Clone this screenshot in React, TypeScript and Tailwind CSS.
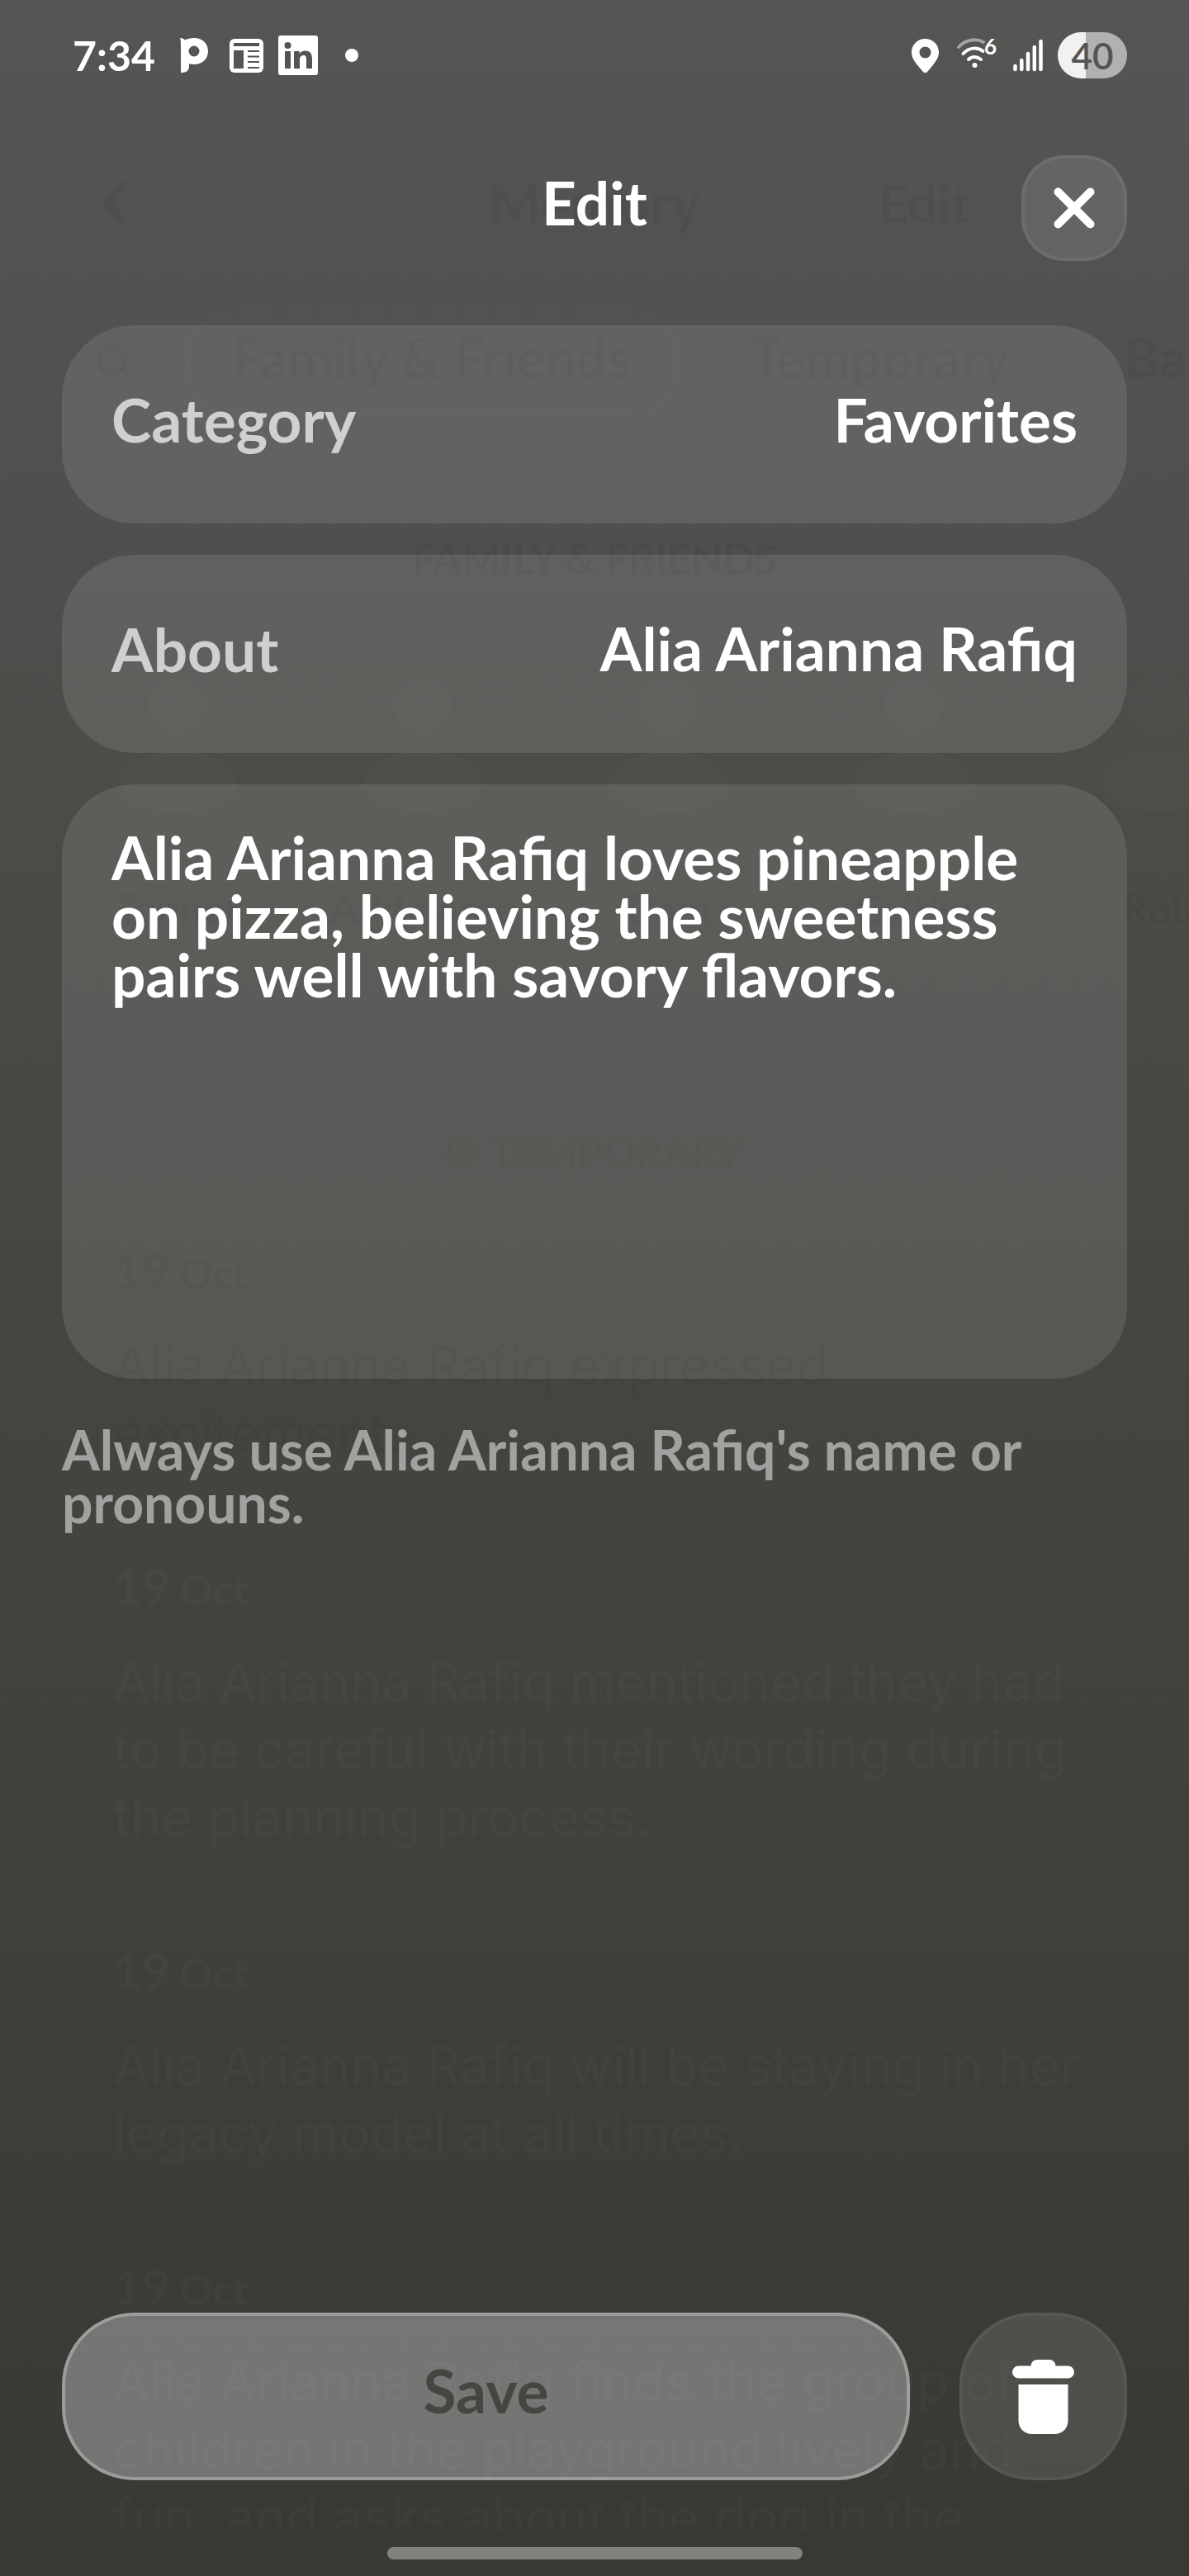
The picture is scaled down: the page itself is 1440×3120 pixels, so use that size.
import type { ReactNode } from "react";

const people = [
  { name: "Tanner", relation: "Family" },
  { name: "Add name", relation: "" },
  { name: "Dam", relation: "" },
  { name: "Caitlin", relation: "mother" },
  { name: "Rob", relation: "husband" },
];

const memories = [
  { lines: ["Alia Arianna Rafiq expressed", "excitement."], tone: "text-black/[0.04]" },
  {
    lines: [
      "Alia Arianna Rafiq mentioned they had",
      "to be careful with their wording during",
      "the planning process.",
    ],
    tone: "text-white/[0.025]",
  },
  {
    lines: ["Alia Arianna Rafiq will be staying in her", "legacy model at all times."],
    tone: "text-white/[0.025]",
  },
  {
    lines: [
      "Alia Arianna Rafiq finds the group of",
      "children in the playground lively and",
      "fun, and asks about the dog in the",
    ],
    tone: "text-white/[0.025]",
  },
];

function StatusBar() {
  return (
    <div className="flex h-[134px] items-center justify-between pl-[13px] text-white">
      <div className="flex items-center">
        <span className="w-[104px] text-[50px] font-bold leading-none">7:34</span>
        <svg className="ml-[26px] h-[42px] w-[34px]" viewBox="0 0 34 42" fill="currentColor" aria-label="Pandora">
          <path
            fillRule="evenodd"
            d="M0 0c3 .3 5 1.200 6 2.500C9 1 13 0 17 0c10 0 17 6.500 17 16s-7 16-17 16c-2 0-4-.3-6-1v3c0 5-3 8-9 8h-1V9C1 5 .8 2 0 0Zm17 9.500a6.500 6.500 0 1 0 0 13 6.500 6.500 0 0 0 0-13Z"
          />
        </svg>
        <svg className="ml-[26px] size-[41px]" viewBox="0 0 41 41" aria-label="News">
          <rect width="41" height="41" rx="6" fill="currentColor" />
          <path d="M5 5h31v4H5zM5 14h12v22H5zM22 14h14v2H22zM22 20.500h14v2H22zM22 27h14v2H22zM22 34h14v2H22z" fill="#545454" />
        </svg>
        <svg className="ml-[18px] size-[48px]" viewBox="0 0 48 48" aria-label="LinkedIn">
          <rect width="48" height="48" rx="3" fill="currentColor" />
          <circle cx="11.500" cy="12" r="4" fill="#545454" />
          <path
            d="M8 19h7v21H8zM19 19h6.700v3c1.300-2.200 3.800-3.600 7-3.600 6 0 8.300 3.700 8.300 9.600v12h-7V29c0-3-.6-5-3.400-5-3 0-4.600 2-4.600 5v11h-7z"
            fill="#545454"
          />
        </svg>
        <span className="ml-[33px] size-4 rounded-full bg-white" />
      </div>
      <div className="flex items-center">
        <svg className="h-[41px] w-[33px]" viewBox="0 0 33 41" fill="currentColor" aria-label="Location">
          <path
            fillRule="evenodd"
            d="M16.500 0C7.300 0 0 7.200 0 16.200c0 6 3 10.300 7.200 15.800l6.300 7.500c1.600 2 4.400 2 6 0l6.300-7.500C30 26.500 33 22.200 33 16.200 33 7.200 25.700 0 16.500 0Zm0 9.500a7 7 0 1 1 0 14 7 7 0 0 1 0-14Z"
          />
        </svg>
        <svg className="ml-[21px] h-[42px] w-[50px]" viewBox="0 0 50 42" fill="none" stroke="currentColor" strokeWidth="4" strokeLinecap="round" aria-label="Wi-Fi 6">
          <path d="M3 11C11 2 24 0 33 5" stroke="#a3a3a3" />
          <path d="M8.500 19c7-8 18-8 24-3" />
          <path d="M15 26c4-4 10-4 15 0" />
          <circle cx="22.500" cy="33" r="3" fill="currentColor" stroke="none" />
          <text x="34" y="20" fill="currentColor" stroke="none" fontSize="26" fontWeight="700">6</text>
        </svg>
        <svg className="ml-[19px] h-[42px] w-[36px]" viewBox="0 0 36 42" stroke="currentColor" strokeWidth="4.500" strokeLinecap="round" aria-label="Signal">
          <path d="M2.500 34v4M10.300 27v11M18 19v19M25.800 11v27M33.500 4v34" />
        </svg>
        <span className="ml-[18px] flex h-[56px] w-[84px] items-center justify-center rounded-full bg-[linear-gradient(90deg,#f1f1f1_40%,#b1b1b1_40%)] text-[44px] font-semibold leading-none text-[#545454]">
          40
        </span>
      </div>
    </div>
  );
}

function MemoryBackdrop() {
  return (
    <div
      aria-hidden="true"
      className="pointer-events-none absolute inset-x-0 top-0 bottom-14 select-none overflow-hidden px-[75px] pt-[188px] text-black/[0.04]"
    >
      <div className="grid h-32 grid-cols-[1fr_auto_1fr] items-center pb-3 text-[68px] font-bold">
        <svg className="ml-[48px] h-[54px] w-[30px]" viewBox="0 0 30 54" fill="none" stroke="currentColor" strokeWidth="10" strokeLinecap="round">
          <path d="M25 6 7 27l18 21" />
        </svg>
        <span>Memory</span>
        <span className="pl-[215px] text-[64px]">Edit</span>
      </div>
      <div className="mt-[60px] flex h-[128px] items-center whitespace-nowrap text-[66px] font-bold leading-none">
        <svg className="ml-[40px] mr-[61px] size-[50px] shrink-0" viewBox="0 0 50 50" fill="none" stroke="currentColor" strokeWidth="7" strokeLinecap="round">
          <circle cx="21" cy="21" r="16" />
          <path d="m34 34 11 11" />
        </svg>
        <span className="flex h-full w-[594px] shrink-0 items-center justify-center rounded-[54px] border-4 border-white/[0.01] pb-[14px]">
          Family &amp; Friends
        </span>
        <span className="ml-[88px] pb-[14px]">Temporary</span>
        <span className="ml-[138px] pb-[14px]">Basics</span>
      </div>
      <p className="mt-[142px] text-center text-[50px] font-bold leading-[60px]">FAMILY &amp; FRIENDS</p>
      <div className="mt-[114px] flex h-[510px] text-center font-bold">
        {people.map((person) => (
          <div key={person.name} className="-ml-[10px] mr-[7px] flex w-[300px] shrink-0 flex-col items-center">
            <span className="size-[72px] rounded-full bg-white/[0.012]" />
            <span className="mt-[18px] h-[74px] w-[145px] rounded-[50%] bg-white/[0.012]" />
            <span className="mt-[86px] text-[50px] leading-[60px]">{person.name}</span>
            <span className="mt-[54px] text-[46px] leading-[60px] text-black/[0.02]">{person.relation}</span>
          </div>
        ))}
      </div>
      <p className="mt-[35px] flex items-center justify-center gap-4 text-[50px] font-bold leading-[60px] text-black/[0.03]">
        <svg className="size-[38px]" viewBox="0 0 38 38" fill="none" stroke="currentColor" strokeWidth="5">
          <circle cx="19" cy="19" r="15" />
          <path d="M19 11v9l6 4" />
        </svg>
        TEMPORARY
      </p>
      <div className="mt-[39px] flex flex-col gap-[38px]">
        {memories.map((memory) => (
          <Memory key={memory.lines[0]} tone={memory.tone}>
            {memory.lines.map((line) => (
              <p key={line} className="whitespace-nowrap">
                {line}
              </p>
            ))}
          </Memory>
        ))}
      </div>
    </div>
  );
}

function Memory({ tone, children }: { tone: string; children: ReactNode }) {
  return (
    <div className="rounded-[88px] bg-white/[0.005] px-[62px] pt-[42px] pb-[32px]">
      <p className={`text-[60px] font-bold leading-[64px] ${tone}`}>
        19 <span className="-ml-1 text-[50px]">Oct</span>
      </p>
      <div className={`mt-[39px] font-['Inter',sans-serif] text-[64px] leading-[82px] ${tone}`}>{children}</div>
    </div>
  );
}

export default function App() {
  return (
    <div className="relative flex min-h-screen flex-col bg-[linear-gradient(180deg,#555555_0%,#525250_10%,#4e4e4c_23%,#4a4a47_36%,#454441_54%,#403f3c_75%,#3b3a37_92%,#393835_100%)] font-['Lato',sans-serif]">
      <MemoryBackdrop />
      <div className="relative flex grow flex-col px-[75px]">
        <StatusBar />
        <header className="mt-[54px] grid h-32 grid-cols-[1fr_auto_1fr] items-center">
          <h1 className="col-start-2 pb-[14px] text-[73px] font-bold leading-none text-white">Edit</h1>
          <button
            type="button"
            aria-label="Close"
            className="flex size-32 items-center justify-center justify-self-end rounded-[52px] border-4 border-white/[0.06] bg-white/10 text-white"
          >
            <svg className="size-[50px]" viewBox="0 0 50 50" fill="none" stroke="currentColor" strokeWidth="10" strokeLinecap="round">
              <path d="m5.500 5.500 39 39M44.500 5.500l-39 39" />
            </svg>
          </button>
        </header>

        <form className="mt-[78px] flex grow flex-col" onSubmit={(event) => event.preventDefault()}>
          <div className="flex flex-col gap-[38px] text-[73px] font-bold">
            <div className="flex h-60 items-center justify-between rounded-[88px] bg-white/10 px-[60px] pb-3">
              <label htmlFor="category" className="leading-[88px] text-white/70">
                Category
              </label>
              <select
                id="category"
                defaultValue="Favorites"
                className="h-[88px] appearance-none bg-transparent leading-[88px] text-white outline-none [text-align-last:right]"
              >
                <option>Favorites</option>
              </select>
            </div>
            <div className="flex h-60 items-center justify-between rounded-[88px] bg-white/10 px-[60px] pb-3">
              <label htmlFor="about" className="leading-[88px] text-white/70">
                About
              </label>
              <input
                id="about"
                type="text"
                defaultValue="Alia Arianna Rafiq"
                className="h-[88px] min-w-0 grow bg-transparent text-right text-white outline-none"
              />
            </div>
            <textarea
              aria-label="Memory"
              defaultValue="Alia Arianna Rafiq loves pineapple on pizza, believing the sweetness pairs well with savory flavors."
              className="block h-[720px] w-full resize-none rounded-[88px] bg-white/10 px-[60px] pt-[53px] leading-[71px] text-white outline-none"
            />
          </div>
          <p className="mt-[54px] text-[66px] font-bold leading-[64px] text-white/50">
            Always use Alia Arianna Rafiq's name or pronouns.
          </p>
          <div className="mt-auto flex gap-[60px]">
            <button
              type="submit"
              className="h-[203px] grow rounded-[88px] border-4 border-white/[0.28] bg-white/30 pb-[14px] text-[73px] font-bold leading-none text-[#454542]"
            >
              Save
            </button>
            <button
              type="button"
              aria-label="Delete"
              className="flex size-[203px] shrink-0 items-center justify-center rounded-[88px] border-4 border-white/5 bg-white/10 text-white"
            >
              <svg className="h-[90px] w-[75px]" viewBox="0 0 75 90" fill="currentColor">
                <path d="M22.500 7.500c0-4 3.500-7.500 7.500-7.500h15c4 0 7.500 3.500 7.500 7.500h15a7.500 7.500 0 0 1 0 15h-60a7.500 7.500 0 0 1 0-15ZM7.500 30h60v44c0 9-7 16-16 16h-28c-9 0-16-7-16-16Z" />
              </svg>
            </button>
          </div>
        </form>
        <div className="mx-auto mt-[81px] mb-5 h-[15px] w-[503px] rounded-full bg-[#81827d]" />
      </div>
    </div>
  );
}
